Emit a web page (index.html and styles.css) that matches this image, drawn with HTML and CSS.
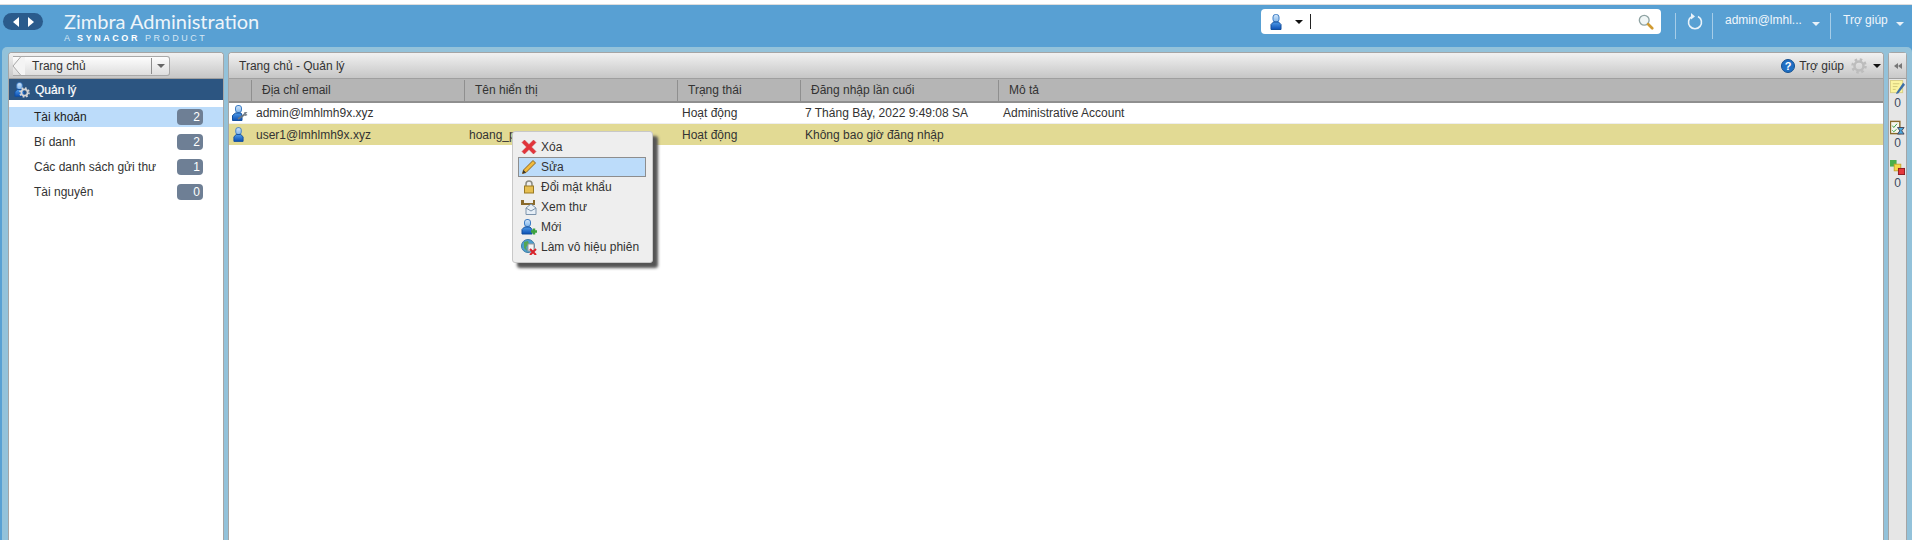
FILE: index.html
```html
<!DOCTYPE html>
<html lang="vi">
<head>
  <meta charset="UTF-8">
  <title>Zimbra Administration</title>
  <link rel="stylesheet" href="styles.css">
</head>
<body>

  <svg class="defs" width="0" height="0">
    <defs>
      <linearGradient id="bodyBlue" x1="0" y1="0" x2="0" y2="1">
        <stop offset="0" stop-color="#4f9be8"/>
        <stop offset="1" stop-color="#0b4fb4"/>
      </linearGradient>
      <linearGradient id="headBlue" x1="0" y1="0" x2="0" y2="1">
        <stop offset="0" stop-color="#d3e7fa"/>
        <stop offset="1" stop-color="#7fb4ea"/>
      </linearGradient>
    </defs>
    <symbol id="person" viewBox="0 0 12 16">
      <rect x="3" y="0.500" width="6" height="7.500" rx="2.500" fill="url(#headBlue)" stroke="#3d7cc4"/>
      <path d="M3.500 8L1 10.500V15.500H11V10.500L8.500 8Z" fill="url(#bodyBlue)" stroke="#134f9c"/>
    </symbol>
    <symbol id="gear" viewBox="0 0 16 16">
      <circle cx="8" cy="8" r="4.500" fill="none" stroke="currentColor" stroke-width="2.500"/>
      <circle cx="8" cy="8" r="6.500" fill="none" stroke="currentColor" stroke-width="2.500" stroke-dasharray="2.500 2.600"/>
    </symbol>
    <symbol id="magnify" viewBox="0 0 18 18">
      <circle cx="7" cy="7" r="5.500" fill="#f0f6f6" stroke="#8fa3a3" stroke-width="1.500"/>
      <path d="M11.500 11.500L16 16" stroke="#d09a30" stroke-width="3" stroke-linecap="round"/>
    </symbol>
  </svg>

  <header class="topbar">
    <div class="nav-pill">
      <span class="nav-arrow nav-back"></span>
      <span class="nav-arrow nav-fwd"></span>
    </div>
    <div class="brand">
      <div class="brand-name">Zimbra Administration</div>
      <div class="brand-sub">A <b>SYNACOR</b> PRODUCT</div>
    </div>
    <div class="search">
      <svg class="search-user" width="12" height="16"><use href="#person"/></svg>
      <span class="tri-down dark"></span>
      <span class="caret"></span>
      <svg class="search-glass" width="16" height="16"><use href="#magnify"/></svg>
    </div>
    <div class="top-tools">
      <div class="tool refresh">
        <svg width="16" height="18" viewBox="0 0 16 18"><path d="M5 4.500A6.500 6.500 0 1 0 11 4.500" fill="none" stroke="#e9f3fa" stroke-width="1.600"/><path d="M4 1V7.500L8 4.500Z" fill="#e9f3fa"/></svg>
      </div>
      <div class="tool user">admin@lmhl...<span class="tri-down"></span></div>
      <div class="tool help">Trợ giúp<span class="tri-down"></span></div>
    </div>
  </header>

  <div class="shell">
    <aside class="sidebar">
      <div class="toolbar">
        <div class="crumb-select">
          <svg class="crumb-tip" width="13" height="20" viewBox="0 0 13 20"><path d="M13 0.500H9L1 10L9 19.500H13" fill="#f4f4f4" stroke="#a8a8a8"/></svg>
          <span class="crumb-text">Trang chủ</span>
          <span class="crumb-btn"><span class="tri-down grey"></span></span>
        </div>
      </div>
      <div class="section-bar">
        <span class="section-icon">
          <svg width="11" height="15"><use href="#person"/></svg>
          <svg class="section-gear" width="11" height="11"><use href="#gear"/></svg>
        </span>
        Quản lý
      </div>
      <ul class="nav-list">
        <li class="nav-item selected">Tài khoản<span class="count">2</span></li>
        <li class="nav-item">Bí danh<span class="count">2</span></li>
        <li class="nav-item">Các danh sách gửi thư<span class="count">1</span></li>
        <li class="nav-item">Tài nguyên<span class="count">0</span></li>
      </ul>
    </aside>

    <main class="content">
      <div class="toolbar content-bar">
        <span class="path">Trang chủ - Quản lý</span>
        <span class="bar-help">
          <svg width="14" height="14" viewBox="0 0 14 14"><circle cx="7" cy="7" r="6.500" fill="#1f6fc4" stroke="#14508f"/><text x="7" y="11" text-anchor="middle" class="help-q">?</text></svg>
          Trợ giúp
        </span>
        <svg class="bar-gear" width="16" height="16"><use href="#gear"/></svg>
        <span class="tri-down dark"></span>
      </div>

      <div class="grid-row grid-head">
        <span></span>
        <span>Địa chỉ email</span>
        <span>Tên hiển thị</span>
        <span>Trạng thái</span>
        <span>Đăng nhập lần cuối</span>
        <span>Mô tả</span>
      </div>

      <div class="grid-row item">
        <span class="item-icon">
          <svg width="16" height="16" viewBox="0 0 16 16"><rect x="3.500" y="0.500" width="6" height="7" rx="2.500" fill="url(#headBlue)" stroke="#3d7cc4"/><path d="M3.500 8L0.500 10.500V15.500H10V10.500L9 8Z" fill="url(#bodyBlue)" stroke="#134f9c"/><path d="M6 14L12.500 9.500" stroke="#6d7680" stroke-width="2"/><path d="M11.500 9.500L12.500 7H15.500L14 8.500L15.500 10L13.500 11Z" fill="#7b848e"/></svg>
        </span>
        <span>admin@lmhlmh9x.xyz</span>
        <span></span>
        <span>Hoạt động</span>
        <span>7 Tháng Bảy, 2022 9:49:08 SA</span>
        <span>Administrative Account</span>
      </div>
      <div class="grid-row item picked">
        <span class="item-icon"><svg class="user-icon" width="11" height="15"><use href="#person"/></svg></span>
        <span>user1@lmhlmh9x.xyz</span>
        <span>hoang_pv</span>
        <span>Hoạt động</span>
        <span>Không bao giờ đăng nhập</span>
        <span></span>
      </div>
    </main>

    <aside class="rail">
      <div class="rail-top"><span class="rail-chev"></span><span class="rail-chev"></span></div>
      <div class="rail-stat">
        <svg width="15" height="15" viewBox="0 0 16 16"><rect x="0.500" y="0.500" width="13" height="13" fill="#fbf4a0" stroke="#d8cf86"/><path d="M3 4H10M3 7H8M3 10H6" stroke="#d0c878"/><path d="M7 13L14 3L16 5L9 14L6.500 15Z" fill="#3c6ea8"/></svg>
        <span>0</span>
      </div>
      <div class="rail-stat">
        <svg width="15" height="15" viewBox="0 0 16 16"><rect x="0.500" y="1.500" width="10" height="13" fill="#f6f6f0" stroke="#8a6a2c" stroke-width="1.500"/><path d="M2.500 6L4 8L7.500 4M2.500 11L4 12.500L7 10" stroke="#2e9a3c" fill="none"/><path d="M8 8H15L12.500 11.500L15 15H8L10.500 11.500Z" fill="#4aa8e0" stroke="#445"/></svg>
        <span>0</span>
      </div>
      <div class="rail-stat">
        <svg width="15" height="15" viewBox="0 0 16 16"><rect width="7" height="7" fill="#4bb04a"/><rect x="4.500" y="4.500" width="7" height="7" fill="#f5d94a" stroke="#c8a52c"/><rect x="9" y="9" width="6.500" height="6.500" fill="#e5383b" stroke="#8e1b1f"/></svg>
        <span>0</span>
      </div>
    </aside>
  </div>

  <!-- context menu for the picked row -->
  <div class="menu">
    <div class="menu-item">
      <svg width="16" height="16" viewBox="0 0 16 16"><path d="M1 3.500L3.500 1L8 5.500L12.500 1L15 3.500L10.500 8L15 12.500L12.500 15L8 10.500L3.500 15L1 12.500L5.500 8Z" fill="#e2333a" stroke="#c23a40" stroke-width="0.500"/></svg>
      Xóa
    </div>
    <div class="menu-item active">
      <svg width="16" height="16" viewBox="0 0 16 16"><path d="M1.500 14.500L2.500 11L12 1.500L14.500 4L5 13.500Z" fill="#f2bb3c" stroke="#8a6420"/><path d="M1.500 14.500L2.500 11L5 13.500Z" fill="#333"/></svg>
      Sửa
    </div>
    <div class="menu-item">
      <svg width="16" height="16" viewBox="0 0 16 16"><path d="M5 7V5A3 3 0 0 1 11 5V7" fill="none" stroke="#8b8b80" stroke-width="1.500"/><rect x="3.500" y="7" width="9" height="7" fill="#e6bf52" stroke="#9a7a24"/></svg>
      Đổi mật khẩu
    </div>
    <div class="menu-item">
      <svg width="16" height="16" viewBox="0 0 16 16"><path d="M0 1H3V4H12V1H14V6H0Z" fill="#8a6a2c"/><path d="M5 9L10 5L15 9V15.500H5Z" fill="#e6eef6" stroke="#7c93ab"/><path d="M5 9L10 12L15 9" fill="none" stroke="#7c93ab"/></svg>
      Xem thư
    </div>
    <div class="menu-item">
      <svg width="16" height="16" viewBox="0 0 16 16"><rect x="3.500" y="0.500" width="6" height="7" rx="2.500" fill="url(#headBlue)" stroke="#3d7cc4"/><path d="M3.500 8L1 10.500V15H11V10.500L9 8Z" fill="url(#bodyBlue)" stroke="#134f9c"/><path d="M10 12.500H16M13 9.500V15.500" stroke="#3da33f" stroke-width="2.500"/></svg>
      Mới
    </div>
    <div class="menu-item">
      <svg width="16" height="16" viewBox="0 0 16 16"><circle cx="7" cy="7" r="6.500" fill="#4d9fd0" stroke="#3a7ba5"/><path d="M3 3L7 2L8 5L5 8L6 12L3 9Z" fill="#55a653"/><rect x="7" y="5" width="6" height="7" fill="#f4f4f4" stroke="#999"/><path d="M9 10L15 16M15 10L9 16" stroke="#d8232a" stroke-width="2"/></svg>
      Làm vô hiệu phiên
    </div>
  </div>

</body>
</html>
```

FILE: styles.css
```css
* {
  box-sizing: border-box;
}

html,
body {
  height: 100%;
}

body {
  margin: 0;
  overflow: hidden;
  display: flex;
  flex-direction: column;
  font-family: "Liberation Sans", Arial, sans-serif;
  font-size: 12px;
  color: #333;
  background-color: #58a0d3;
  border-top: 4px solid #fff;
}

.defs {
  position: absolute;
}

.tri-down {
  display: inline-block;
  flex: none;
  width: 8px;
  height: 4px;
  border-left: 4px solid transparent;
  border-right: 4px solid transparent;
  border-top: 4px solid #e8f1f8;
}

.tri-down.dark {
  border-top-color: #111;
}

.tri-down.grey {
  border-top-color: #666;
}

/* top bar */
.topbar {
  height: 43px;
  flex: none;
  display: flex;
  border-top: 1px solid #ddd;
  color: #fff;
}

.nav-pill {
  width: 40px;
  height: 17px;
  flex: none;
  margin: 8px 0 0 3px;
  display: flex;
  align-items: center;
  justify-content: space-around;
  padding: 0 5px;
  border-radius: 9px;
  background-color: #2a5b8c;
}

.nav-arrow {
  width: 6px;
  height: 10px;
  border-top: 5px solid transparent;
  border-bottom: 5px solid transparent;
}

.nav-back {
  border-right: 6px solid #fff;
}

.nav-fwd {
  border-left: 6px solid #fff;
}

.brand {
  width: 196px;
  flex: none;
  margin: 4px 0 0 21px;
  white-space: nowrap;
}

.brand-name {
  font-family: Lato, sans-serif;
  font-size: 20px;
  line-height: 24px;
  color: #eef5fa;
}

.brand-sub {
  font-size: 9px;
  line-height: 11px;
  letter-spacing: 2.550px;
  color: #d5e6f3;
}

.brand-sub b {
  color: #fff;
}

.search {
  width: 400px;
  height: 25px;
  flex: none;
  margin: 4px 0 0 1001px;
  display: flex;
  align-items: center;
  padding: 0 7px 0 9px;
  border-radius: 4px;
  background-color: #fff;
}

.search-user {
  margin-right: 13px;
}

.caret {
  width: 1px;
  height: 15px;
  margin-left: 7px;
  background-color: #222;
}

.search-glass {
  margin-left: auto;
}

.top-tools {
  display: flex;
  flex: none;
  margin-left: 14px;
  height: 26px;
  margin-top: 8px;
}

.tool {
  display: flex;
  align-items: center;
  height: 100%;
  padding-bottom: 12px;
  border-left: 1px solid #a6cde8;
  white-space: nowrap;
  color: #f0f6fb;
}

.tool .tri-down {
  margin-top: 7px;
}

.refresh {
  width: 37px;
  padding: 0 0 10px 11px;
}

.user {
  width: 118px;
  padding-left: 12px;
}

.user .tri-down {
  margin-left: 10px;
}

.help {
  padding-left: 12px;
}

.help .tri-down {
  margin-left: 8px;
}

/* work area */
.shell {
  flex: 1;
  min-height: 0;
  margin-left: 2px;
  display: flex;
  padding: 5px 5px 0 6px;
  border-radius: 5px 5px 0 0;
  background-color: #93c2da;
}

.toolbar {
  height: 26px;
  flex: none;
  display: flex;
  align-items: center;
  border-bottom: 1px solid #9f9f9f;
  background: linear-gradient(#f1f1f1, #c6c6c6);
}

.sidebar {
  width: 216px;
  flex: none;
  border: 1px solid #a5a5a5;
  border-bottom: 0;
  border-radius: 4px 4px 0 0;
  background-color: #fff;
}

.sidebar .toolbar {
  padding-left: 4px;
  border-radius: 3px 3px 0 0;
}

.crumb-select {
  width: 157px;
  height: 20px;
  display: flex;
  align-items: center;
  border: 1px solid #a8a8a8;
  border-left: 0;
  border-radius: 0 3px 3px 0;
  background: linear-gradient(#fdfdfd, #dedede);
}

.crumb-tip {
  margin-left: -1px;
  flex: none;
}

.crumb-text {
  margin-left: 7px;
  flex: 1;
}

.crumb-btn {
  width: 18px;
  height: 16px;
  display: flex;
  align-items: center;
  justify-content: center;
  border-left: 1px solid #8d8d8d;
}

.section-bar {
  height: 21px;
  display: flex;
  align-items: center;
  padding-left: 5px;
  color: #fff;
  background-color: #2c5581;
  -webkit-text-stroke: 0.200px #fff;
}

.section-icon {
  position: relative;
  width: 16px;
  height: 16px;
  margin-right: 5px;
}

.section-gear {
  position: absolute;
  right: 0;
  bottom: 0;
  color: #d5d5d5;
}

.nav-list {
  list-style: none;
  margin: 0;
  padding: 7px 0 0;
}

.nav-item {
  height: 20px;
  margin-bottom: 5px;
  display: flex;
  align-items: center;
  justify-content: space-between;
  padding: 0 20px 0 25px;
}

.nav-item.selected {
  color: #222;
  background-color: #bcdcfa;
}

.count {
  width: 26px;
  height: 16px;
  padding-right: 3px;
  line-height: 16px;
  text-align: right;
  color: #fff;
  border-radius: 4px;
  background-color: #6e7f95;
}

.content {
  flex: 1;
  min-width: 0;
  margin-left: 4px;
  border: 1px solid #a5a5a5;
  border-bottom: 0;
  border-radius: 4px 4px 0 0;
  background-color: #fff;
}

.content-bar {
  padding: 0 2px 0 10px;
  border-radius: 3px 3px 0 0;
}

.path {
  flex: 1;
}

.bar-help {
  display: flex;
  align-items: center;
  gap: 4px;
}

.help-q {
  font-size: 11px;
  font-weight: bold;
  fill: #fff;
}

.bar-gear {
  margin: 0 6px 0 7px;
  color: #bdbdbd;
}

/* account table */
.grid-row {
  display: grid;
  grid-template-columns: 22px 213px 213px 123px 198px 1fr;
  align-items: center;
}

.grid-head {
  height: 24px;
  border-bottom: 2px solid #8f8f8f;
  background-color: #b5b5b5;
}

.grid-head span {
  height: 21px;
  line-height: 21px;
  padding-left: 10px;
  border-left: 1px solid #8f8f8f;
}

.grid-head span:first-child {
  border-left: 0;
}

.item {
  height: 20px;
}

.item span {
  padding-left: 5px;
  white-space: nowrap;
}

.item .item-icon {
  display: flex;
  padding-left: 3px;
}

.item .user-icon {
  margin-left: 1px;
}

.item.picked {
  height: 22px;
  border-top: 1px solid #eee;
  background-color: #e2da94;
}

/* right rail */
.rail {
  width: 19px;
  flex: none;
  margin-left: 4px;
  border: 1px solid #a5a5a5;
  border-bottom: 0;
  border-radius: 4px 4px 0 0;
  background-color: #e6e6e6;
}

.rail-top {
  height: 26px;
  display: flex;
  align-items: center;
  justify-content: center;
  border-bottom: 1px solid #9f9f9f;
  background: linear-gradient(#efefef, #c9c9c9);
}

.rail-chev {
  width: 4px;
  height: 6px;
  border-top: 3px solid transparent;
  border-bottom: 3px solid transparent;
  border-right: 4px solid #777;
}

.rail-stat {
  display: flex;
  flex-direction: column;
  align-items: center;
  height: 40px;
  padding-top: 1px;
  line-height: 14px;
  color: #3b4a5e;
}

.rail-stat svg {
  flex: none;
  margin-bottom: 1px;
}

/* context menu */
.menu {
  position: absolute;
  left: 512px;
  top: 131px;
  width: 141px;
  height: 132px;
  padding: 5px 6px 0 5px;
  border: 1px solid #c8c8c8;
  border-radius: 3px;
  background-color: #eee;
  box-shadow: 5px 5px 3px #555;
}

.menu-item {
  height: 20px;
  display: flex;
  align-items: center;
  gap: 4px;
  padding-left: 2px;
  border: 1px solid transparent;
  white-space: nowrap;
}

.menu-item.active {
  border-color: #8d8d8d;
  background-color: #bcdcfa;
}
```
